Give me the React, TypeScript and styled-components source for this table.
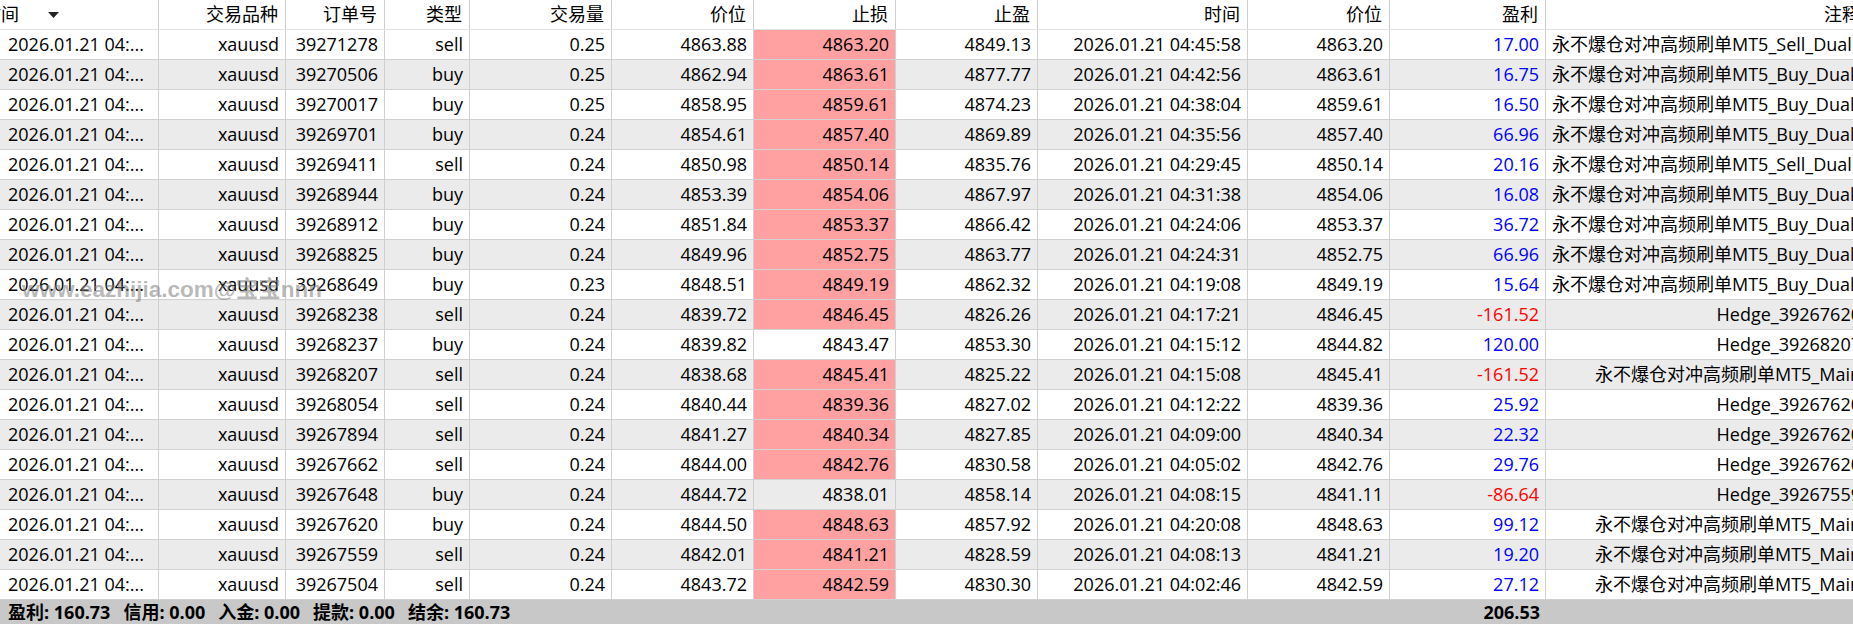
import React from "react";
import styled, { createGlobalStyle } from "styled-components";

const GlobalStyle = createGlobalStyle`
  html, body {
    margin: 0;
    padding: 0;
    background: #ffffff;
    overflow: hidden;
  }
  body {
    font-family: "Open Sans", "Noto Sans CJK SC", sans-serif;
  }
`;

const COLS =
  "159px 127px 99px 85px 142px 142px 142px 142px 210px 142px 156px 322px";

const Table = styled.div`
  position: relative;
  width: 1868px;
  font-family: "Open Sans", "Noto Sans CJK SC", sans-serif;
  font-size: 18px;
  color: #000;
`;

const Row = styled.div<{ $alt?: boolean }>`
  display: grid;
  grid-template-columns: ${COLS};
  height: 30px;
  box-sizing: border-box;
  border-bottom: 1px solid #d2d2d2;
  background: ${(p) => (p.$alt ? "#ebebeb" : "#ffffff")};
`;

const HeaderRow = styled.div`
  display: grid;
  grid-template-columns: ${COLS};
  height: 30px;
  box-sizing: border-box;
  border-bottom: 1px solid #e2e2e2;
  background: #ffffff;
`;

const HeadCell = styled.div`
  box-sizing: border-box;
  border-right: 1px solid #cdcdcd;
  padding: 0 7px 0 4px;
  line-height: 29px;
  text-align: right;
  white-space: nowrap;
  overflow: hidden;
`;

const HeadFirst = styled(HeadCell)`
  display: flex;
  align-items: center;
  padding: 0;
  text-align: left;
`;

const ClippedLabel = styled.span`
  margin-left: -17px;
`;

const SortArrow = styled.svg`
  margin-left: 29px;
  margin-top: 1px;
`;

const Cell = styled.div<{
  $align?: "left" | "right";
  $hit?: boolean;
  $tone?: "up" | "down";
}>`
  box-sizing: border-box;
  border-right: 1px solid #d0d0d0;
  padding: 0 6px;
  line-height: 29px;
  white-space: nowrap;
  overflow: hidden;
  text-overflow: ellipsis;
  text-align: ${(p) => p.$align ?? "right"};
  background: ${(p) => (p.$hit ? "#ffa1a1" : "transparent")};
  color: ${(p) =>
    p.$tone === "up" ? "#0000ff" : p.$tone === "down" ? "#ff0000" : "#000000"};
`;

const FirstCell = styled(Cell)`
  padding-left: 8px;
  text-overflow: clip;
`;

const CommentCell = styled(Cell)`
  text-overflow: clip;
`;

const Footer = styled.div`
  display: grid;
  grid-template-columns: 1390px 156px 1fr;
  height: 24px;
  background: #c8c8c8;
  font-weight: 700;
  line-height: 25px;
`;

const Summary = styled.div`
  display: flex;
  gap: 13px;
  padding-left: 8px;
  white-space: nowrap;
`;

const FooterTotal = styled.div`
  text-align: right;
  padding-right: 6px;
`;

const Watermark = styled.div`
  position: absolute;
  left: 22px;
  top: 271px;
  font-family: "Liberation Sans", "Noto Sans CJK SC", sans-serif;
  font-size: 22.5px;
  font-weight: 700;
  color: rgba(125, 125, 125, 0.55);
  pointer-events: none;
  white-space: nowrap;
`;

type Trade = {
  id: string;
  type: "buy" | "sell";
  vol: string;
  open: string;
  sl: string;
  tp: string;
  time: string;
  close: string;
  profit: string;
  comment: string;
  hit: boolean;
  wide?: boolean;
};

const DUAL_SELL = "永不爆仓对冲高频刷单MT5_Sell_Dual";
const DUAL_BUY = "永不爆仓对冲高频刷单MT5_Buy_Dual";
const MAIN = "永不爆仓对冲高频刷单MT5_Main";

const trades: Trade[] = [
  { id: "39271278", type: "sell", vol: "0.25", open: "4863.88", sl: "4863.20", tp: "4849.13", time: "04:45:58", close: "4863.20", profit: "17.00", comment: DUAL_SELL, hit: true, wide: true },
  { id: "39270506", type: "buy", vol: "0.25", open: "4862.94", sl: "4863.61", tp: "4877.77", time: "04:42:56", close: "4863.61", profit: "16.75", comment: DUAL_BUY, hit: true, wide: true },
  { id: "39270017", type: "buy", vol: "0.25", open: "4858.95", sl: "4859.61", tp: "4874.23", time: "04:38:04", close: "4859.61", profit: "16.50", comment: DUAL_BUY, hit: true, wide: true },
  { id: "39269701", type: "buy", vol: "0.24", open: "4854.61", sl: "4857.40", tp: "4869.89", time: "04:35:56", close: "4857.40", profit: "66.96", comment: DUAL_BUY, hit: true, wide: true },
  { id: "39269411", type: "sell", vol: "0.24", open: "4850.98", sl: "4850.14", tp: "4835.76", time: "04:29:45", close: "4850.14", profit: "20.16", comment: DUAL_SELL, hit: true, wide: true },
  { id: "39268944", type: "buy", vol: "0.24", open: "4853.39", sl: "4854.06", tp: "4867.97", time: "04:31:38", close: "4854.06", profit: "16.08", comment: DUAL_BUY, hit: true, wide: true },
  { id: "39268912", type: "buy", vol: "0.24", open: "4851.84", sl: "4853.37", tp: "4866.42", time: "04:24:06", close: "4853.37", profit: "36.72", comment: DUAL_BUY, hit: true, wide: true },
  { id: "39268825", type: "buy", vol: "0.24", open: "4849.96", sl: "4852.75", tp: "4863.77", time: "04:24:31", close: "4852.75", profit: "66.96", comment: DUAL_BUY, hit: true, wide: true },
  { id: "39268649", type: "buy", vol: "0.23", open: "4848.51", sl: "4849.19", tp: "4862.32", time: "04:19:08", close: "4849.19", profit: "15.64", comment: DUAL_BUY, hit: true, wide: true },
  { id: "39268238", type: "sell", vol: "0.24", open: "4839.72", sl: "4846.45", tp: "4826.26", time: "04:17:21", close: "4846.45", profit: "-161.52", comment: "Hedge_39267620", hit: true },
  { id: "39268237", type: "buy", vol: "0.24", open: "4839.82", sl: "4843.47", tp: "4853.30", time: "04:15:12", close: "4844.82", profit: "120.00", comment: "Hedge_39268207", hit: false },
  { id: "39268207", type: "sell", vol: "0.24", open: "4838.68", sl: "4845.41", tp: "4825.22", time: "04:15:08", close: "4845.41", profit: "-161.52", comment: MAIN, hit: true },
  { id: "39268054", type: "sell", vol: "0.24", open: "4840.44", sl: "4839.36", tp: "4827.02", time: "04:12:22", close: "4839.36", profit: "25.92", comment: "Hedge_39267620", hit: true },
  { id: "39267894", type: "sell", vol: "0.24", open: "4841.27", sl: "4840.34", tp: "4827.85", time: "04:09:00", close: "4840.34", profit: "22.32", comment: "Hedge_39267620", hit: true },
  { id: "39267662", type: "sell", vol: "0.24", open: "4844.00", sl: "4842.76", tp: "4830.58", time: "04:05:02", close: "4842.76", profit: "29.76", comment: "Hedge_39267620", hit: true },
  { id: "39267648", type: "buy", vol: "0.24", open: "4844.72", sl: "4838.01", tp: "4858.14", time: "04:08:15", close: "4841.11", profit: "-86.64", comment: "Hedge_39267559", hit: false },
  { id: "39267620", type: "buy", vol: "0.24", open: "4844.50", sl: "4848.63", tp: "4857.92", time: "04:20:08", close: "4848.63", profit: "99.12", comment: MAIN, hit: true },
  { id: "39267559", type: "sell", vol: "0.24", open: "4842.01", sl: "4841.21", tp: "4828.59", time: "04:08:13", close: "4841.21", profit: "19.20", comment: MAIN, hit: true },
  { id: "39267504", type: "sell", vol: "0.24", open: "4843.72", sl: "4842.59", tp: "4830.30", time: "04:02:46", close: "4842.59", profit: "27.12", comment: MAIN, hit: true },
];

const headers = [
  "交易品种",
  "订单号",
  "类型",
  "交易量",
  "价位",
  "止损",
  "止盈",
  "时间",
  "价位",
  "盈利",
  "注释",
];

const summary = [
  "盈利: 160.73",
  "信用: 0.00",
  "入金: 0.00",
  "提款: 0.00",
  "结余: 160.73",
];

export default function App() {
  return (
    <>
      <GlobalStyle />
      <Table>
        <HeaderRow>
          <HeadFirst>
            <ClippedLabel>时间</ClippedLabel>
            <SortArrow width="11" height="6" viewBox="0 0 11 6">
              <path d="M0 0 H11 L5.5 6 Z" fill="#222" />
            </SortArrow>
          </HeadFirst>
          {headers.map((h, i) => (
            <HeadCell key={i}>{h}</HeadCell>
          ))}
        </HeaderRow>
        {trades.map((t, i) => (
          <Row key={t.id} $alt={i % 2 === 1}>
            <FirstCell $align="left">2026.01.21 04:...</FirstCell>
            <Cell>xauusd</Cell>
            <Cell>{t.id}</Cell>
            <Cell>{t.type}</Cell>
            <Cell>{t.vol}</Cell>
            <Cell>{t.open}</Cell>
            <Cell $hit={t.hit}>{t.sl}</Cell>
            <Cell>{t.tp}</Cell>
            <Cell>2026.01.21 {t.time}</Cell>
            <Cell>{t.close}</Cell>
            <Cell $tone={t.profit.startsWith("-") ? "down" : "up"}>
              {t.profit}
            </Cell>
            <CommentCell $align={t.wide ? "left" : "right"}>
              {t.comment}
            </CommentCell>
          </Row>
        ))}
        <Footer>
          <Summary>
            {summary.map((s) => (
              <span key={s}>{s}</span>
            ))}
          </Summary>
          <FooterTotal>206.53</FooterTotal>
        </Footer>
        <Watermark>www.eazhijia.com@宝宝nnn</Watermark>
      </Table>
    </>
  );
}
